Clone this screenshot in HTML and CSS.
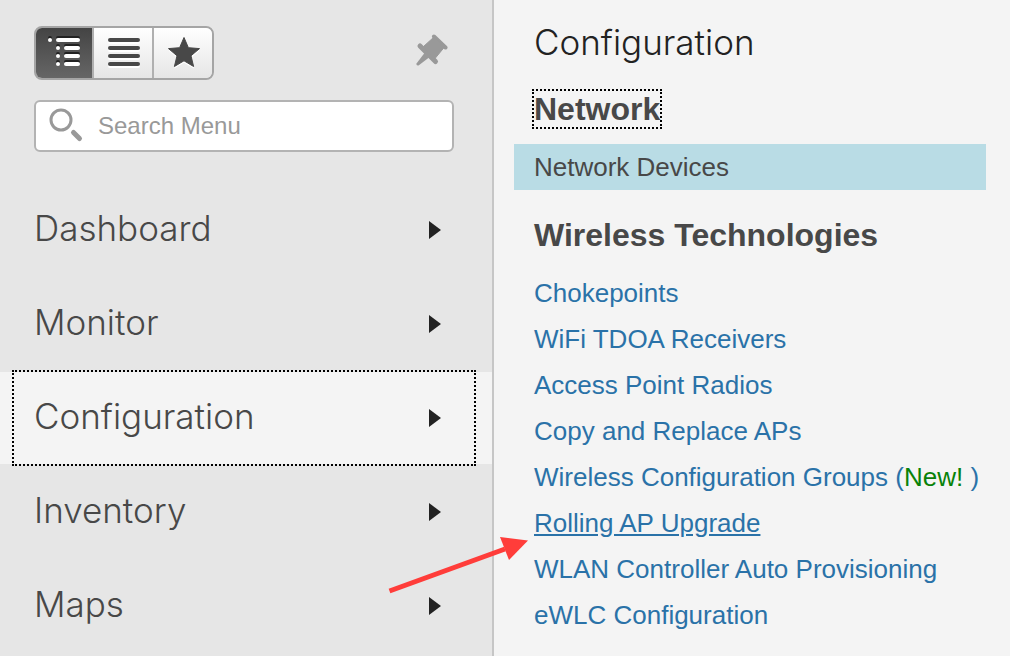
FILE: index.html
```
<!DOCTYPE html>
<html lang="en">
<head>
    <meta charset="UTF-8">
    <meta name="viewport" content="width=device-width, initial-scale=1.0">
    <title>Configuration</title>
    <link rel="stylesheet" href="styles.css">
</head>
<body>
    <nav id="sidebar">
        <div class="toolbar">
            <div class="view-switch">
                <button type="button" class="active" aria-label="Tree view">
                    <svg width="56" height="50" viewBox="0 0 56 50">
                        <g fill="#222">
                            <circle cx="14" cy="10" r="2"/>
                            <rect x="20" y="8" width="24" height="4" rx="2"/>
                            <circle cx="22" cy="18" r="2"/>
                            <rect x="28" y="16" width="16" height="4" rx="2"/>
                            <circle cx="22" cy="26" r="2"/>
                            <rect x="28" y="24" width="16" height="4" rx="2"/>
                            <circle cx="22" cy="34" r="2"/>
                            <rect x="28" y="32" width="16" height="4" rx="2"/>
                        </g>
                        <g fill="#fff">
                            <circle cx="14" cy="12" r="2"/>
                            <rect x="20" y="10" width="24" height="4" rx="2"/>
                            <circle cx="22" cy="20" r="2"/>
                            <rect x="28" y="18" width="16" height="4" rx="2"/>
                            <circle cx="22" cy="28" r="2"/>
                            <rect x="28" y="26" width="16" height="4" rx="2"/>
                            <circle cx="22" cy="36" r="2"/>
                            <rect x="28" y="34" width="16" height="4" rx="2"/>
                        </g>
                    </svg>
                </button>
                <button type="button" aria-label="List view">
                    <svg width="58" height="50" viewBox="0 0 58 50">
                        <g fill="#fff">
                            <rect x="14" y="12" width="32" height="4" rx="2"/>
                            <rect x="14" y="20" width="32" height="4" rx="2"/>
                            <rect x="14" y="28" width="32" height="4" rx="2"/>
                            <rect x="14" y="36" width="32" height="4" rx="2"/>
                        </g>
                        <g fill="#484848">
                            <rect x="14" y="10" width="32" height="4" rx="2"/>
                            <rect x="14" y="18" width="32" height="4" rx="2"/>
                            <rect x="14" y="26" width="32" height="4" rx="2"/>
                            <rect x="14" y="34" width="32" height="4" rx="2"/>
                        </g>
                    </svg>
                </button>
                <button type="button" aria-label="Favorites">
                    <svg width="58" height="50" viewBox="0 0 58 50">
                        <path fill="#fff" d="M30 12l4.400 9.600 11.400 1-8.500 7.200 2.600 10.700L30 34.800l-9.600 5.700L23 29.800l-8.500-7.200 11.100-.9z"/>
                        <path fill="#484848" stroke="#484848" stroke-linejoin="round" d="M30 9.500l4.400 10.200 11.100.9-8.500 7.200 2.600 10.700L30 32.800l-9.600 5.700L23 27.800l-8.500-7.200 11.100-.9z"/>
                    </svg>
                </button>
            </div>
            <button type="button" class="pin" aria-label="Pin menu">
                <svg width="32" height="32" viewBox="0 0 32 32" fill="#999" stroke="#999" stroke-linecap="round">
                    <path d="M18 2.500L29.500 13.500" stroke-width="4"/>
                    <path d="M4 12L19.500 27.500" stroke-width="5"/>
                    <path d="M18 3L7.500 12.500 19 24.500 28.500 13z"/>
                    <path stroke="none" d="M8.500 19L.5 29.500Q0 32 2.500 31.500L13 23.500z"/>
                </svg>
            </button>
        </div>

        <label class="search">
            <svg width="34" height="34" viewBox="0 0 34 34" fill="none" stroke="#999">
                <circle cx="11" cy="11" r="10" stroke-width="3"/>
                <path d="M23.500 23.500l6 6" stroke-width="5" stroke-linecap="round"/>
            </svg>
            <input type="text" placeholder="Search Menu" aria-label="Search Menu">
        </label>

        <ul class="menu">
            <li><a href="#">Dashboard</a></li>
            <li><a href="#">Monitor</a></li>
            <li class="selected"><a href="#">Configuration</a></li>
            <li><a href="#">Inventory</a></li>
            <li><a href="#">Maps</a></li>
        </ul>
    </nav>

    <main id="submenu">
        <h1>Configuration</h1>

        <h2><span class="focused">Network</span></h2>
        <ul class="links">
            <li class="current"><a href="#">Network Devices</a></li>
        </ul>

        <h2>Wireless Technologies</h2>
        <ul class="links">
            <li><a href="#">Chokepoints</a></li>
            <li><a href="#">WiFi TDOA Receivers</a></li>
            <li><a href="#">Access Point Radios</a></li>
            <li><a href="#">Copy and Replace APs</a></li>
            <li><a href="#">Wireless Configuration Groups (<span class="new">New!</span> )</a></li>
            <li class="hovered">
                <a href="#">Rolling AP Upgrade</a>
                <svg class="pointer" width="140" height="58" viewBox="0 0 140 58">
                    <path d="M1.500 54L117 12" stroke="#ff3d3a" stroke-width="5"/>
                    <path d="M112 0l28 3.500L121 23z" fill="#ff3d3a"/>
                </svg>
            </li>
            <li><a href="#">WLAN Controller Auto Provisioning</a></li>
            <li><a href="#">eWLC Configuration</a></li>
        </ul>
    </main>
</body>
</html>
```

FILE: styles.css
```
* {
    box-sizing: border-box;
}

body {
    margin: 0;
    display: flex;
    min-height: 100vh;
    background: #f4f4f4;
    font-family: "Liberation Sans", Arial, sans-serif;
    color: #484848;
}

ul {
    list-style: none;
    margin: 0;
    padding: 0;
}

a {
    text-decoration: none;
}

button {
    border: 0;
    padding: 0;
    background: none;
}

svg {
    display: block;
}

/* left menu */

#sidebar {
    flex: 0 0 494px;
    padding-top: 26px;
    background: #e6e6e6;
    border-right: 2px solid #c6c6c6;
}

.toolbar {
    display: flex;
    justify-content: space-between;
    align-items: center;
    padding: 0 44px 0 34px;
}

.view-switch {
    display: flex;
    border: 2px solid #a5a5a5;
    border-radius: 8px;
    overflow: hidden;
}

.view-switch button {
    background: linear-gradient(#fff, #e6e6e6);
}

.view-switch button + button {
    border-left: 2px solid #b0b0b0;
}

.view-switch button.active {
    background: linear-gradient(#444, #666);
}

.pin {
    padding-bottom: 6px;
}

.search {
    display: flex;
    align-items: center;
    gap: 14px;
    height: 52px;
    margin: 20px 38px 32px 34px;
    padding: 0 14px;
    background: #fff;
    border: 2px solid #b3b3b3;
    border-radius: 6px;
}

.search svg {
    overflow: visible;
}

.search input {
    flex: 1;
    min-width: 0;
    padding: 0;
    border: 0;
    outline: 0;
    background: none;
    font: 24px "Liberation Sans", Arial, sans-serif;
    color: #484848;
}

.search input::placeholder {
    color: #999;
}

.menu li {
    margin-bottom: 2px;
    padding: 0 18px 0 14px;
}

.menu a {
    display: flex;
    justify-content: space-between;
    align-items: center;
    height: 92px;
    padding: 0 33px 4px 20px;
    font: 300 35px "Inter", sans-serif;
    color: #484848;
}

.menu a::after {
    content: "";
    margin-top: 4px;
    border: solid transparent;
    border-width: 9px 0 9px 12px;
    border-left-color: #222;
}

.menu .selected {
    background: #f4f4f4;
}

.menu .selected a {
    outline: 2px dotted #000;
}

/* right panel */

#submenu {
    flex: 1;
    min-width: 0;
    padding: 20px 24px 18px 20px;
}

h1 {
    margin: 0 20px 26px;
    font: 300 35px/44px "Inter", sans-serif;
    color: #222;
}

h2 {
    margin: 0 20px 16px;
    font-size: 32px;
    line-height: 38px;
}

.links + h2 {
    margin-top: 26px;
}

.focused {
    outline: 2px dotted #000;
}

.links a {
    display: block;
    padding: 0 20px;
    font-size: 26px;
    line-height: 46px;
    color: #2a72a8;
    white-space: nowrap;
}

.links .current {
    background: #b9dce5;
}

.links .current a {
    color: #484848;
}

.links .new {
    color: #088208;
}

.links .hovered {
    position: relative;
}

.links .hovered a {
    text-decoration: underline;
}

/* red arrow that points at the hovered link */
.pointer {
    position: absolute;
    top: 37px;
    right: 100%;
    margin-right: -14px;
}
```
